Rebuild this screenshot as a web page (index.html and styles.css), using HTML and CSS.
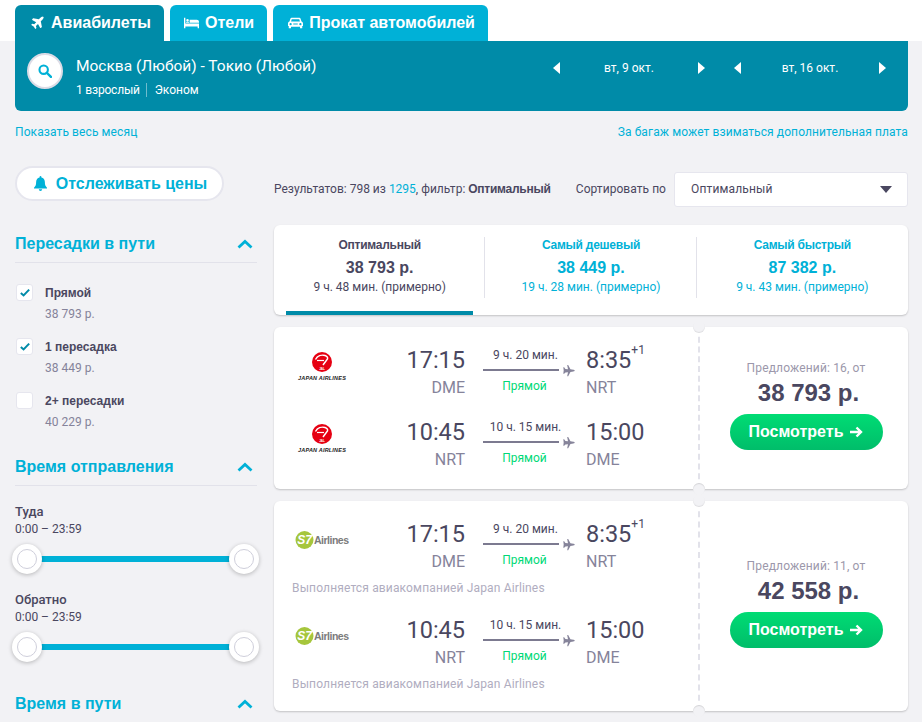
FILE: index.html
```html
<!DOCTYPE html>
<html lang="ru">
<head>
    <meta charset="UTF-8">
    <meta name="viewport" content="width=device-width, initial-scale=1.0">
    <title>Авиабилеты Москва - Токио</title>
    <link rel="stylesheet" href="styles.css">
</head>
<body>
    <!-- Вкладки -->
    <nav class="tabs">
        <a class="tab tab-active">
            <svg class="tab-icon" viewBox="0 0 20 20"><path fill="#fff" d="M17.4 1.2c.9-.2 1.5.4 1.3 1.3-.2 1-.9 2-1.700 2.800l-2.300 2.300 1.600 8-.3.5-1.500 1.100-.6-.1-3.200-5.800-2.900 2.900.6 2.700-.2.500-1.100 1-.5-.1-2.100-3.300-3.300-2.100-.1-.5 1-1.100.5-.2 2.700.6 2.900-2.900-5.800-3.200-.1-.6 1.100-1.500.5-.3 8 1.600 2.300-2.300c.8-.8 1.800-1.500 2.800-1.700z"/></svg>
            Авиабилеты
        </a>
        <a class="tab tab-hotel">
            <svg class="tab-icon" viewBox="0 0 20 16"><path fill="#fff" d="M0 1h1.800v7.500H20V15h-1.800v-2.500H1.800V15H0zM3 4.500a1.700 1.700 0 1 1 3.400 0 1.700 1.700 0 0 1-3.400 0zM7.500 3.500H17c1.700 0 3 1.200 3 3v1H7.500zM2.800 6.800h3.900v.9H2.800z"/></svg>
            Отели
        </a>
        <a class="tab">
            <svg class="tab-icon" viewBox="0 0 20 16"><path fill="#fff" fill-rule="evenodd" d="M4.800 1h10.400c.8 0 1.400.5 1.600 1.200L18 6c1.100.4 2 1.300 2 2.500V12h-1v2.500c0 .4-.3.500-.5.500h-2c-.4 0-.5-.2-.5-.5V13H4v1.500c0 .4-.2.500-.5.500h-2c-.4 0-.5-.2-.5-.5V12H0V8.500C0 7.300.9 6.400 2 6l1.200-3.800C3.400 1.500 4 1 4.800 1zM5 3 4.100 6h11.800L15 3zM3.500 8a1.500 1.500 0 1 0 0 3 1.500 1.500 0 0 0 0-3zm13 0a1.500 1.500 0 1 0 0 3 1.500 1.500 0 0 0 0-3zM7 8.500V10h6V8.500z"/></svg>
            Прокат автомобилей
        </a>
    </nav>

    <div class="page">
        <!-- Панель поиска -->
        <section class="search-panel">
            <div class="search-btn">
                <svg viewBox="0 0 16 16" width="14" height="14"><circle cx="6.500" cy="6.500" r="4.800" fill="none" stroke="#00b1d7" stroke-width="2.400"/><path d="M10 10l4.800 4.800" stroke="#00b1d7" stroke-width="2.800" stroke-linecap="round"/></svg>
            </div>
            <div class="search-info">
                <div class="route">Москва (Любой) - Токио (Любой)</div>
                <div class="passengers"><span class="pax">1 взрослый</span><span>Эконом</span></div>
            </div>
            <div class="date-pick"><i class="arr-l"></i><span>вт, 9 окт.</span><i class="arr-r"></i></div>
            <div class="date-pick"><i class="arr-l"></i><span>вт, 16 окт.</span><i class="arr-r"></i></div>
        </section>

        <div class="links-row">
            <a>Показать весь месяц</a>
            <a>За багаж может взиматься дополнительная плата</a>
        </div>

        <div class="content">
            <!-- Фильтры -->
            <aside class="sidebar">
                <button class="track-btn">
                    <svg viewBox="0 0 14 16" width="13" height="15"><path fill="#00b1d7" d="M7 0c.6 0 1 .4 1 1v.6c2.300.5 3.700 2.300 3.700 4.900 0 3.300.7 4.700 2.300 6v.9H0v-.9c1.600-1.300 2.300-2.700 2.300-6C2.300 3.900 3.700 2.100 6 1.600V1c0-.6.4-1 1-1zM5.200 14.300h3.600C8.700 15.300 8 16 7 16s-1.700-.7-1.800-1.700z"/></svg>
                    Отслеживать цены
                </button>

                <div class="filter-head">
                    <span>Пересадки в пути</span>
                    <svg class="chev" viewBox="0 0 16 10"><path d="M1.500 8.500 8 2.500l6.500 6" fill="none" stroke="#00b1d7" stroke-width="2.800"/></svg>
                </div>
                <div class="stops">
                    <div class="stop">
                        <div class="check">
                            <svg viewBox="0 0 12 10" width="10" height="9"><path d="M1 5.500 4.300 8.500 11 1.500" fill="none" stroke="#008ba8" stroke-width="2.400"/></svg>
                        </div>
                        <div><div class="stop-name">Прямой</div><div class="stop-price">38 793 р.</div></div>
                    </div>
                    <div class="stop">
                        <div class="check">
                            <svg viewBox="0 0 12 10" width="10" height="9"><path d="M1 5.500 4.300 8.500 11 1.500" fill="none" stroke="#008ba8" stroke-width="2.400"/></svg>
                        </div>
                        <div><div class="stop-name">1 пересадка</div><div class="stop-price">38 449 р.</div></div>
                    </div>
                    <div class="stop">
                        <div class="check"></div>
                        <div><div class="stop-name">2+ пересадки</div><div class="stop-price">40 229 р.</div></div>
                    </div>
                </div>

                <div class="filter-head head-time">
                    <span>Время отправления</span>
                    <svg class="chev" viewBox="0 0 16 10"><path d="M1.500 8.500 8 2.500l6.500 6" fill="none" stroke="#00b1d7" stroke-width="2.800"/></svg>
                </div>
                <div class="time-block">
                    <div class="time-name">Туда</div>
                    <div class="time-range">0:00 – 23:59</div>
                    <div class="slider"><b class="thumb thumb-l"></b><b class="thumb thumb-r"></b></div>
                </div>
                <div class="time-block">
                    <div class="time-name">Обратно</div>
                    <div class="time-range">0:00 – 23:59</div>
                    <div class="slider"><b class="thumb thumb-l"></b><b class="thumb thumb-r"></b></div>
                </div>

                <div class="filter-head head-way">
                    <span>Время в пути</span>
                    <svg class="chev" viewBox="0 0 16 10"><path d="M1.500 8.500 8 2.500l6.500 6" fill="none" stroke="#00b1d7" stroke-width="2.800"/></svg>
                </div>
            </aside>

            <!-- Результаты -->
            <main class="results">
                <div class="results-top">
                    <div class="count">Результатов: 798 из <a>1295</a>, фильтр: <strong>Оптимальный</strong></div>
                    <div class="sort-label">Сортировать по</div>
                    <div class="sort-select"><span>Оптимальный</span><i class="sort-caret"></i></div>
                </div>

                <div class="sort-tabs">
                    <div class="sort-tab sort-active">
                        <div class="st-name">Оптимальный</div>
                        <div class="st-price">38 793 р.</div>
                        <div class="st-time">9 ч. 48 мин. (примерно)</div>
                    </div>
                    <div class="sort-tab">
                        <div class="st-name">Самый дешевый</div>
                        <div class="st-price">38 449 р.</div>
                        <div class="st-time">19 ч. 28 мин. (примерно)</div>
                    </div>
                    <div class="sort-tab">
                        <div class="st-name">Самый быстрый</div>
                        <div class="st-price">87 382 р.</div>
                        <div class="st-time">9 ч. 43 мин. (примерно)</div>
                    </div>
                </div>

                <!-- Билет 1 -->
                <article class="ticket">
                    <div class="ticket-main">
                        <div class="flight">
                            <div class="logo">
                                <svg viewBox="0 0 60 34" width="60" height="34"><circle cx="30" cy="11" r="10" fill="#e60012"/><path d="M23.500 8.500c2-3.500 6-5 9.500-4 2 .6 3 2 2.500 3.500L31 14" fill="none" stroke="#fff" stroke-width="1.500"/><path d="M25 9.500h7" stroke="#fff" stroke-width="1.200"/><text x="30" y="19" class="jal-small">JAL</text><text x="30" y="29" class="jal-text">JAPAN AIRLINES</text></svg>
                            </div>
                            <div class="dep"><div class="time">17:15</div><div class="code">DME</div></div>
                            <div class="mid">
                                <div class="dur">9 ч. 20 мин.</div>
                                <div class="line"><i></i><svg viewBox="0 0 20 20" width="13" height="13"><path fill="#86849a" d="M19.500 10c0 .8-1 1.300-2 1.500l-4.500.8-3.500 6.700H8l1.200-6.500-4 .5L3.300 15H2l.6-5L2 5h1.300l1.900 2.500 4 .5L8 1.500h1.500L13 8.200l4.500.8c1 .2 2 .2 2 1z"/></svg></div>
                                <div class="direct">Прямой</div>
                            </div>
                            <div class="arr"><div class="time">8:35<sup>+1</sup></div><div class="code">NRT</div></div>
                        </div>
                        <div class="flight">
                            <div class="logo">
                                <svg viewBox="0 0 60 34" width="60" height="34"><circle cx="30" cy="11" r="10" fill="#e60012"/><path d="M23.500 8.500c2-3.500 6-5 9.500-4 2 .6 3 2 2.500 3.500L31 14" fill="none" stroke="#fff" stroke-width="1.500"/><path d="M25 9.500h7" stroke="#fff" stroke-width="1.200"/><text x="30" y="19" class="jal-small">JAL</text><text x="30" y="29" class="jal-text">JAPAN AIRLINES</text></svg>
                            </div>
                            <div class="dep"><div class="time">10:45</div><div class="code">NRT</div></div>
                            <div class="mid">
                                <div class="dur">10 ч. 15 мин.</div>
                                <div class="line"><i></i><svg viewBox="0 0 20 20" width="13" height="13"><path fill="#86849a" d="M19.500 10c0 .8-1 1.300-2 1.500l-4.500.8-3.500 6.700H8l1.200-6.500-4 .5L3.300 15H2l.6-5L2 5h1.300l1.900 2.500 4 .5L8 1.500h1.500L13 8.200l4.500.8c1 .2 2 .2 2 1z"/></svg></div>
                                <div class="direct">Прямой</div>
                            </div>
                            <div class="arr"><div class="time">15:00</div><div class="code">DME</div></div>
                        </div>
                    </div>
                    <div class="ticket-side">
                        <div class="offers">Предложений: 16, от</div>
                        <div class="price">38 793 р.</div>
                        <button class="view-btn">Посмотреть <svg viewBox="0 0 14 12" width="14" height="12"><path d="M1 6h11M7.500 1.500 12 6l-4.500 4.500" fill="none" stroke="#fff" stroke-width="2.400"/></svg></button>
                    </div>
                </article>

                <!-- Билет 2 -->
                <article class="ticket">
                    <div class="ticket-main">
                        <div class="flight">
                            <div class="logo logo-s7">
                                <svg viewBox="0 0 60 20" width="60" height="20"><circle cx="12.500" cy="10" r="9" fill="#a6c63c"/><text x="12.500" y="14" class="s7-mark">S7</text><text x="22" y="13.500" class="s7-text">Airlines</text></svg>
                            </div>
                            <div class="dep"><div class="time">17:15</div><div class="code">DME</div></div>
                            <div class="mid">
                                <div class="dur">9 ч. 20 мин.</div>
                                <div class="line"><i></i><svg viewBox="0 0 20 20" width="13" height="13"><path fill="#86849a" d="M19.500 10c0 .8-1 1.300-2 1.500l-4.500.8-3.500 6.700H8l1.200-6.500-4 .5L3.300 15H2l.6-5L2 5h1.300l1.900 2.500 4 .5L8 1.500h1.500L13 8.200l4.500.8c1 .2 2 .2 2 1z"/></svg></div>
                                <div class="direct">Прямой</div>
                            </div>
                            <div class="arr"><div class="time">8:35<sup>+1</sup></div><div class="code">NRT</div></div>
                        </div>
                        <div class="operated">Выполняется авиакомпанией Japan Airlines</div>
                        <div class="flight">
                            <div class="logo logo-s7">
                                <svg viewBox="0 0 60 20" width="60" height="20"><circle cx="12.500" cy="10" r="9" fill="#a6c63c"/><text x="12.500" y="14" class="s7-mark">S7</text><text x="22" y="13.500" class="s7-text">Airlines</text></svg>
                            </div>
                            <div class="dep"><div class="time">10:45</div><div class="code">NRT</div></div>
                            <div class="mid">
                                <div class="dur">10 ч. 15 мин.</div>
                                <div class="line"><i></i><svg viewBox="0 0 20 20" width="13" height="13"><path fill="#86849a" d="M19.500 10c0 .8-1 1.300-2 1.500l-4.500.8-3.500 6.700H8l1.200-6.500-4 .5L3.300 15H2l.6-5L2 5h1.300l1.900 2.500 4 .5L8 1.500h1.500L13 8.200l4.500.8c1 .2 2 .2 2 1z"/></svg></div>
                                <div class="direct">Прямой</div>
                            </div>
                            <div class="arr"><div class="time">15:00</div><div class="code">DME</div></div>
                        </div>
                        <div class="operated">Выполняется авиакомпанией Japan Airlines</div>
                    </div>
                    <div class="ticket-side">
                        <div class="offers">Предложений: 11, от</div>
                        <div class="price">42 558 р.</div>
                        <button class="view-btn">Посмотреть <svg viewBox="0 0 14 12" width="14" height="12"><path d="M1 6h11M7.500 1.500 12 6l-4.500 4.500" fill="none" stroke="#fff" stroke-width="2.400"/></svg></button>
                    </div>
                </article>
            </main>
        </div>
    </div>
</body>
</html>
```

FILE: styles.css
```css
html, body {
    margin: 0;
    height: 722px;
    overflow: hidden;
}
body {
    font-family: Roboto, "Liberation Sans", sans-serif;
    font-size: 12px;
    color: #4a4760;
    background-color: #f2f2f5;
}
a {
    color: #00b1d7;
}

/* Вкладки */
.tabs {
    display: flex;
    gap: 6px;
    height: 36px;
    padding: 5px 0 0 15px;
    background-color: #fff;
}
.tab {
    display: flex;
    align-items: center;
    gap: 6px;
    padding: 0 13px 0 15px;
    font-family: "Liberation Sans", sans-serif;
    font-size: 16px;
    font-weight: bold;
    color: #fff;
    background-color: #00b1d7;
    border-radius: 6px 6px 0 0;
}
.tab-hotel {
    padding: 0 13px 0 14px;
}
.tab-active {
    background-color: #008ba8;
}
.tab-icon {
    width: 15px;
    height: 14px;
}

.page {
    padding: 0 14px 0 15px;
}

/* Панель поиска */
.search-panel {
    display: flex;
    height: 70px;
    box-sizing: border-box;
    padding: 12px 22px 0 12px;
    color: #fff;
    background-color: #008ba8;
    border-radius: 0 0 6px 6px;
}
.search-btn {
    display: flex;
    align-items: center;
    justify-content: center;
    width: 32px;
    height: 32px;
    border: 2px solid #dcdce6;
    border-radius: 50%;
    background-color: #fff;
}
.search-info {
    flex: 1;
    margin-left: 13px;
}
.route {
    font-size: 15.500px;
    line-height: 26px;
}
.passengers {
    display: flex;
    margin-top: 4px;
    line-height: 14px;
}
.pax {
    margin-right: 8px;
    padding-right: 6px;
    letter-spacing: -0.2px;
    border-right: 1px solid #6fbccd;
}
.date-pick {
    display: flex;
    align-items: center;
    justify-content: space-between;
    width: 152px;
    height: 30px;
    margin-left: 29px;
    font-size: 12px;
}
.arr-l, .arr-r {
    width: 0;
    height: 0;
    border-top: 6px solid transparent;
    border-bottom: 6px solid transparent;
}
.arr-l {
    border-right: 7px solid #fff;
}
.arr-r {
    border-left: 7px solid #fff;
}

.links-row {
    display: flex;
    justify-content: space-between;
    margin-top: 13px;
    line-height: 16px;
    letter-spacing: 0.1px;
}

.content {
    display: flex;
    margin-top: 26px;
}

/* Фильтры */
.sidebar {
    flex: none;
    width: 242px;
    margin-right: 17px;
}
.track-btn {
    display: flex;
    align-items: center;
    justify-content: center;
    gap: 9px;
    width: 209px;
    height: 35px;
    padding: 0 0 0 2px;
    font-family: "Liberation Sans", sans-serif;
    font-size: 16px;
    font-weight: bold;
    color: #00b1d7;
    background-color: #fff;
    border: 2px solid #e6e6ee;
    border-radius: 18px;
}
.filter-head {
    display: flex;
    align-items: center;
    justify-content: space-between;
    height: 36px;
    margin-top: 19px;
    padding: 6px 4px 0 0;
    font-family: "Liberation Sans", sans-serif;
    font-size: 16px;
    font-weight: bold;
    color: #00b1d7;
    border-bottom: 1px solid #e2e2ea;
}
.chev {
    width: 16px;
    height: 10px;
}
.stops {
    padding-top: 13px;
}
.stop {
    display: flex;
    height: 54px;
}
.check {
    display: flex;
    align-items: center;
    justify-content: center;
    flex: none;
    width: 15px;
    height: 15px;
    margin: 8px 12px 0 1px;
    background-color: #fff;
    border: 1px solid #e6e6ee;
    border-radius: 3px;
}
.stop-name {
    font-family: "Liberation Sans", sans-serif;
    font-size: 12px;
    font-weight: bold;
    line-height: 16px;
    margin-top: 9px;
}
.stop-price {
    margin-top: 5px;
    line-height: 16px;
    color: #85839a;
}
.head-time {
    margin-top: 5px;
}
.time-block {
    box-sizing: border-box;
    height: 88px;
    padding-top: 17px;
}
.time-name {
    font-size: 13px;
    font-weight: 500;
    line-height: 17px;
}
.time-range {
    line-height: 18px;
}
.slider {
    position: relative;
    height: 6px;
    margin: 18px 13px 0 12px;
    background-color: #00b1d7;
}
.thumb {
    position: absolute;
    top: -12px;
    box-sizing: border-box;
    width: 30px;
    height: 30px;
    background-color: #fff;
    border-radius: 50%;
    box-shadow: 0 1px 4px rgba(0, 0, 0, 0.25);
}
.thumb::after {
    content: "";
    position: absolute;
    top: 5px;
    left: 5px;
    box-sizing: border-box;
    width: 20px;
    height: 20px;
    border: 1px solid #cfcfdb;
    border-radius: 50%;
}
.thumb-l {
    left: -15px;
}
.thumb-r {
    right: -15px;
}
.head-way {
    margin-top: 18px;
    border-bottom: none;
}

/* Результаты */
.results {
    flex: 1;
    min-width: 0;
}
.results-top {
    display: flex;
    align-items: center;
    height: 36px;
    margin-top: 5px;
}
.count {
    flex: 1;
}
.count strong {
    font-family: "Liberation Sans", sans-serif;
    letter-spacing: -0.25px;
}
.sort-label {
    margin-right: 8px;
    letter-spacing: 0.05px;
}
.sort-select {
    display: flex;
    align-items: center;
    justify-content: space-between;
    box-sizing: border-box;
    width: 234px;
    height: 35px;
    padding: 0 15px 0 16px;
    letter-spacing: 0.15px;
    background-color: #fff;
    border: 1px solid #e6e6ee;
    border-radius: 3px;
}
.sort-caret {
    width: 0;
    height: 0;
    border-left: 6px solid transparent;
    border-right: 6px solid transparent;
    border-top: 7px solid #4a4760;
}
.sort-tabs {
    display: grid;
    grid-template-columns: repeat(3, 1fr);
    height: 90px;
    margin-top: 18px;
    background-color: #fff;
    border-radius: 6px;
    box-shadow: 0 1px 2px rgba(0, 0, 0, 0.2);
}
.sort-tab {
    position: relative;
    padding-top: 12px;
    text-align: center;
    color: #00b1d7;
}
.sort-tab + .sort-tab::before {
    content: "";
    position: absolute;
    top: 12px;
    left: -1px;
    height: 61px;
    border-left: 1px solid #e2e2ea;
}
.sort-active {
    color: #4a4760;
}
.sort-active::after {
    content: "";
    position: absolute;
    left: 12px;
    right: 12px;
    bottom: 0;
    height: 4px;
    background-color: #008ba8;
}
.st-name {
    font-family: "Liberation Sans", sans-serif;
    font-size: 12px;
    font-weight: bold;
    line-height: 16px;
    letter-spacing: -0.25px;
}
.st-price {
    font-family: "Liberation Sans", sans-serif;
    font-size: 16px;
    font-weight: bold;
    line-height: 24px;
    margin-top: 3px;
}
.st-time {
    line-height: 16px;
    margin-top: -1px;
}

/* Билеты */
.ticket {
    display: flex;
    margin-top: 12px;
    background-color: #fff;
    border-radius: 6px;
    box-shadow: 0 1px 2px rgba(0, 0, 0, 0.2);
}
.ticket-main {
    position: relative;
    flex: none;
    box-sizing: border-box;
    width: 426px;
    padding: 18px 0 16px 18px;
    border-right: 2px dashed #e2e2ea;
}
/* вырезы билета сверху и снизу */
.ticket-main::before, .ticket-main::after {
    content: "";
    position: absolute;
    right: -7px;
    width: 12px;
    height: 12px;
    background-color: #f2f2f5;
    border-radius: 50%;
}
.ticket-main::before {
    top: -6px;
    box-shadow: inset 0 -1px 1px rgba(0, 0, 0, 0.08);
}
.ticket-main::after {
    bottom: -6px;
    box-shadow: inset 0 1px 1px rgba(0, 0, 0, 0.12);
}
.flight {
    display: flex;
    height: 56px;
}
.flight + .flight {
    margin-top: 16px;
}
.operated + .flight {
    margin-top: 19px;
}
.logo {
    flex: none;
    width: 90px;
    margin-top: 6px;
}
.logo svg {
    display: block;
}
.logo-s7 {
    margin-top: 11px;
}
.jal-small {
    font: bold 3px "Liberation Sans", sans-serif;
    fill: #fff;
    text-anchor: middle;
}
.jal-text {
    font: italic bold 5.500px "Liberation Sans", sans-serif;
    fill: #222;
    text-anchor: middle;
    letter-spacing: 0.2px;
}
.s7-mark {
    font: italic bold 12px "Liberation Sans", sans-serif;
    fill: #fff;
    text-anchor: middle;
}
.s7-text {
    font: bold 10.500px "Liberation Sans", sans-serif;
    fill: #7b7b7b;
    letter-spacing: -0.5px;
}
.dep {
    flex: none;
    width: 83px;
    text-align: right;
}
.time {
    margin-top: 1px;
    font-size: 23.500px;
    line-height: 28px;
}
.time sup {
    font-size: 12px;
    line-height: 0;
    vertical-align: 14px;
}
.code {
    font-size: 16px;
    line-height: 28px;
    color: #85839a;
}
.mid {
    flex: none;
    width: 92px;
    margin: 0 11px 0 18px;
}
.dur {
    width: 85px;
    margin-top: 1px;
    text-align: center;
    line-height: 18px;
}
.line {
    display: flex;
    align-items: center;
    justify-content: space-between;
    height: 14px;
    margin-top: -1px;
}
.line i {
    width: 76px;
    height: 2px;
    background-color: #7c7a90;
}
.direct {
    width: 83px;
    margin-top: 1px;
    text-align: center;
    line-height: 16px;
    color: #00d977;
}
.operated {
    margin-top: 5px;
    line-height: 16px;
    letter-spacing: 0.15px;
    color: #b0adc0;
}
.operated:last-child {
    margin-bottom: 3px;
}
.ticket-side {
    flex: 1;
    display: flex;
    flex-direction: column;
    align-items: center;
    justify-content: center;
    padding: 0 0 6px 4px;
}
.offers {
    line-height: 16px;
    letter-spacing: 0.15px;
    color: #9c98ab;
}
.price {
    margin-left: 5px;
    font-family: "Liberation Sans", sans-serif;
    font-size: 24px;
    font-weight: bold;
    line-height: 34px;
}
.view-btn {
    display: flex;
    align-items: center;
    justify-content: center;
    gap: 6px;
    width: 153px;
    height: 36px;
    margin-top: 4px;
    padding: 0;
    font-family: "Liberation Sans", sans-serif;
    font-size: 16px;
    font-weight: bold;
    color: #fff;
    background: linear-gradient(#00dc74, #00bd6a);
    border: none;
    border-radius: 18px;
}
```
